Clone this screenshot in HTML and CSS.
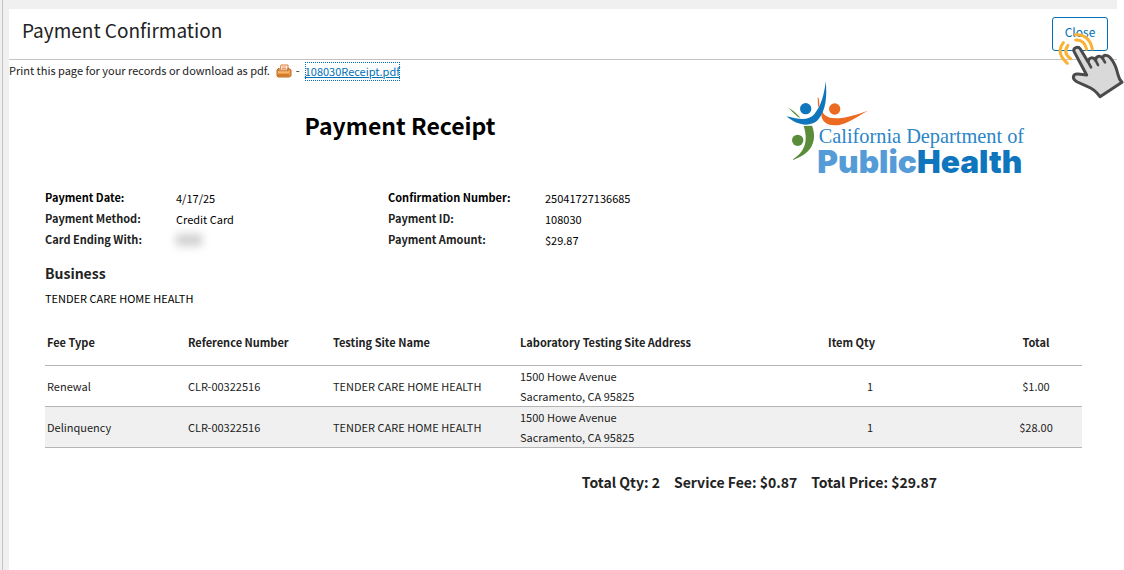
FILE: index.html
```html
<!DOCTYPE html>
<html lang="en">
<head>
<meta charset="utf-8">
<title>Payment Confirmation</title>
<link rel="stylesheet" href="styles.css">
</head>
<body>
<div class="frame">
  <main class="panel">
    <header class="panel-header">
      <h1 class="panel-title">Payment Confirmation</h1>
      <button class="close-button" type="button">Close</button>
      <svg class="pointer" viewBox="72 90 210 210" aria-hidden="true">
        <g fill="none" stroke="#f9b233" stroke-width="9" stroke-linecap="round">
          <path d="M136 104Q178 102 187 147"/>
          <path d="M137 120Q163 118 170 148"/>
          <path d="M100 128Q76 158 112 190"/>
          <path d="M114 136Q97 158 122 176"/>
        </g>
        <path d="M132 154C129 143 144 137 151 147L174 185C177 171 190 170 197 181C197 168 210 165 218 175C218 162 236 164 243 176C257 193 261 211 264 224Q267 238 276 247L210 290C199 275 189 266 173 260L142 246C124 237 128 221 144 222L170 225Z" fill="#d9d9d9" stroke="#4a4a4a" stroke-width="9" stroke-linejoin="round"/>
        <path d="M174 185L183 202M197 181L204 195M218 175L225 187" fill="none" stroke="#4a4a4a" stroke-width="8" stroke-linecap="round"/>
      </svg>
    </header>

    <p class="download">
      <span>Print this page for your records or download as pdf.</span>
      <svg class="printer" viewBox="0 0 16 14" role="img" aria-label="Print">
        <path d="M4 6L5 1H12L12 6Z" fill="#fff3e4" stroke="#dc7d35"/>
        <path d="M6 3H10M6 4.500H10" stroke="#e9986a"/>
        <path d="M1 6L3 4V7H12V4L15 6V12L13 13H2L1 12Z" fill="#ef9c47" stroke="#b96420"/>
        <path d="M2 8H13" stroke="#ffd08e"/>
        <path d="M2 11H13" stroke="#b35b1b"/>
      </svg>
      <span class="dash">-</span>
      <a class="receipt-link" href="#receipt">108030Receipt.pdf</a>
    </p>

    <section class="receipt" id="receipt">
      <div class="receipt-top">
        <h2 class="receipt-title">Payment Receipt</h2>
        <svg class="logo" viewBox="39 30 741 300" role="img" aria-label="California Department of Public Health">
          <path d="M55 110Q75 120 91 141L84 138Q66 122 55 110Z" fill="#5b8c3a"/>
          <path d="M143 78L147 84L148 101L144 111Z" fill="#ec6b23"/>
          <path d="M155 115C162 145 195 155 294 119C239 150 223 163 193 163C164 163 149 145 155 115Z" fill="#ec6b23"/>
          <circle cx="194" cy="114" r="17" fill="#ec6b23"/>
          <path d="M167 31C172 75 168 120 143 148C119 170 80 163 50 136C92 147 117 148 134 128C153 105 163 71 167 31Z" fill="#0f75bd"/>
          <circle cx="107" cy="113" r="17" fill="#0f75bd"/>
          <path d="M101 165L126 164C139 195 137 247 66 267C101 245 117 215 101 165Z" fill="#5b8c3a"/>
          <circle cx="83" cy="208" r="17" fill="#5b8c3a"/>
          <text class="logo-serif" x="146" y="215">California Department of</text>
          <text class="logo-sans" x="142" y="306"><tspan class="logo-light">Public</tspan><tspan class="logo-dark">Health</tspan></text>
        </svg>
      </div>

      <dl class="summary">
        <dt class="strong">Payment Date:</dt><dd>4/17/25</dd>
        <dt class="strong">Confirmation Number:</dt><dd>25041727136685</dd>
        <dt>Payment Method:</dt><dd>Credit Card</dd>
        <dt>Payment ID:</dt><dd>108030</dd>
        <dt>Card Ending With:</dt><dd><span class="redacted"></span></dd>
        <dt>Payment Amount:</dt><dd>$29.87</dd>
      </dl>

      <h3 class="business-title">Business</h3>
      <p class="business-name">TENDER CARE HOME HEALTH</p>

      <table class="fees">
        <colgroup><col class="c-type"><col class="c-ref"><col class="c-site"><col class="c-address"><col class="c-qty"><col class="c-total"></colgroup>
        <thead>
          <tr><th>Fee Type</th><th>Reference Number</th><th>Testing Site Name</th><th>Laboratory Testing Site Address</th><th class="qty">Item Qty</th><th class="total">Total</th></tr>
        </thead>
        <tbody>
          <tr><td>Renewal</td><td>CLR-00322516</td><td>TENDER CARE HOME HEALTH</td><td>1500 Howe Avenue<br>Sacramento, CA 95825</td><td class="qty">1</td><td class="total">$1.00</td></tr>
          <tr><td>Delinquency</td><td>CLR-00322516</td><td>TENDER CARE HOME HEALTH</td><td>1500 Howe Avenue<br>Sacramento, CA 95825</td><td class="qty">1</td><td class="total">$28.00</td></tr>
        </tbody>
      </table>

      <div class="totals">
        <span>Total Qty: 2</span>
        <span>Service Fee: $0.87</span>
        <span>Total Price: $29.87</span>
      </div>
    </section>
  </main>
</div>
</body>
</html>
```

FILE: styles.css
```css
* {
  box-sizing: border-box;
}

body {
  margin: 0;
  background: #fff;
  color: #222;
  font: 11px/20px "Noto Sans CJK SC", "Noto Sans", sans-serif;
}

h1, h2, h3, p, dl, dd {
  margin: 0;
}

.frame {
  display: flex;
  min-height: 100vh;
  margin-right: 7px;
  padding-left: 2px;
  background: #f0f0f0;
}

.panel {
  flex: 1;
  display: flex;
  flex-direction: column;
  border-left: 1px solid #c4c4c4;
  padding: 9px 0 0 6px;
}

.panel > * {
  background: #fff;
}

.panel-header {
  position: relative;
  display: flex;
  justify-content: space-between;
  align-items: flex-start;
  height: 51px;
  padding: 8px 9px 0 13px;
  border-bottom: 1px solid #c4c4c4;
}

.panel-title {
  font-size: 19px;
  line-height: 26px;
  font-weight: 400;
}

.close-button {
  width: 56px;
  height: 34px;
  padding: 0 0 4px;
  border: 1px solid #0070b8;
  border-radius: 3px;
  background: #fff;
  color: #0070b8;
  font: inherit;
  font-size: 12px;
}

.pointer {
  position: absolute;
  top: 21px;
  right: -7px;
  width: 70px;
  height: 70px;
}

.download {
  display: flex;
  align-items: flex-start;
}

.printer {
  width: 16px;
  height: 14px;
  margin: 4px 4px 0 6px;
}

.dash {
  margin-right: 5px;
}

.receipt-link {
  margin-top: 2px;
  color: #0070b8;
  line-height: 19px;
  outline: 1px dotted #0070b8;
  outline-offset: -1px;
}

.receipt {
  flex: 1;
  padding: 0 35px 20px 36px;
}

.receipt-top {
  display: grid;
  grid-template-columns: 1fr 327px;
}

.receipt-title {
  padding-top: 28px;
  color: #000;
  font-size: 23px;
  line-height: 32px;
  text-align: center;
}

.logo {
  width: 247px;
  height: 100px;
  margin-left: 28px;
}

.logo-serif {
  fill: #2b85c6;
  font: 61px "Liberation Serif", serif;
}

.logo-sans {
  font: 900 95px Inter, "Liberation Sans", sans-serif;
}

.logo-light {
  fill: #559bd8;
}

.logo-dark {
  fill: #0f75bd;
}

.summary {
  display: grid;
  grid-template-columns: 131px 212px 157px 1fr;
  grid-auto-rows: 21px;
  padding-top: 6px;
}

.summary dt {
  font-weight: 700;
}

.summary dd {
  padding-top: 1px;
  color: #000;
}

.summary .strong {
  color: #000;
}

.redacted {
  display: block;
  width: 26px;
  height: 12px;
  margin-top: 4px;
  background: #d0d0d0;
  filter: blur(4px);
}

.business-title {
  padding-top: 11px;
  font-size: 14px;
  line-height: 24px;
}

.business-name {
  padding-top: 3px;
  color: #000;
}

.fees {
  width: 100%;
  margin-top: 12px;
  border-collapse: collapse;
  table-layout: fixed;
}

.c-type { width: 141px; }
.c-ref { width: 145px; }
.c-site { width: 187px; }
.c-qty { width: 200px; }
.c-total { width: 92px; }

.fees th,
.fees td {
  padding: 0 2px;
  border-bottom: 1px solid #b5b5b5;
  text-align: left;
}

.fees th {
  height: 45px;
}

.fees tbody tr:nth-child(even) {
  background: #f0f0f0;
}

.fees .qty {
  padding-right: 115px;
  text-align: right;
}

.fees td.qty {
  padding-right: 117px;
}

.fees .total {
  text-align: center;
}

.totals {
  display: flex;
  justify-content: flex-end;
  gap: 14px;
  padding: 22px 145px 0 0;
  font-size: 14px;
  line-height: 24px;
  font-weight: 700;
}
```
